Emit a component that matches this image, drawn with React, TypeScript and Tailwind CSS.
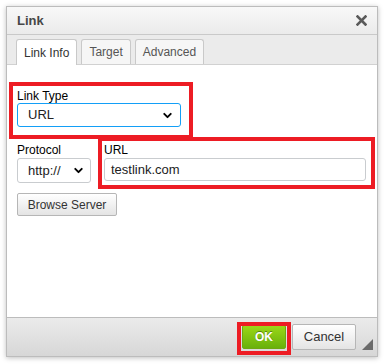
import { ChevronDown } from 'lucide-react';

function SelectBox({ value, className }: { value: string; className: string }) {
  return (
    <div className={`flex items-center justify-between bg-white rounded-[3px] ${className}`}>
      <span>{value}</span>
      <ChevronDown className="size-[13px] text-black" strokeWidth={3.5} />
    </div>
  );
}

export default function App() {
  const tabs = ['Link Info', 'Target', 'Advanced'];

  return (
    <div className="relative w-[384px] h-[364px] bg-white font-['Liberation_Sans',Arial,sans-serif] text-[12px] text-[#222]">
      <div className="absolute left-[6px] top-[6px] w-[372px] h-[351px] flex flex-col border border-[#bcbcbc] shadow-[0_1px_5px_rgba(0,0,0,0.25)] bg-white">
        {/* title */}
        <div className="h-[28px] flex items-center justify-between pl-[10px] pr-[10px] bg-gradient-to-b from-[#f8f8f8] to-[#ebebeb] border-b border-[#c9c9c9]">
          <span className="font-bold text-[13px] text-[#474747]">Link</span>
          <svg width="11" height="11" viewBox="0 0 11 11">
            <path d="M1.5 1.5 L9.5 9.5 M9.5 1.5 L1.5 9.5" stroke="#5a5a5a" strokeWidth="2.6" strokeLinecap="square" />
          </svg>
        </div>

        {/* tabs */}
        <div className="h-[30px] flex items-end gap-[4px] pl-[9px] bg-[#ebebeb] border-b border-[#d1d1d1]">
          {tabs.map((t, i) => (
            <div
              key={t}
              className={`h-[25px] flex items-center px-[7px] rounded-t-[3px] border border-b-0 border-[#c9c9c9] text-[12px] ${
                i === 0 ? 'bg-white text-[#333] -mb-px h-[26px]' : 'bg-[#f6f6f6] text-[#555]'
              }`}
            >
              {t}
            </div>
          ))}
        </div>

        {/* body */}
        <div className="flex-1 bg-white px-[10px] pt-[24px]">
          <div className="leading-[14px] text-black">Link Type</div>
          <SelectBox value="URL" className="w-[164px] h-[24px] pl-[10px] pr-[6px] border border-[#139ff7] text-[13px]" />

          <div className="flex gap-[13px] mt-[16px]">
            <div className="flex flex-col">
              <div className="leading-[14px] text-black">Protocol</div>
              <SelectBox value="http://" className="mt-[1px] w-[74px] h-[25px] pl-[10px] pr-[5px] border border-[#c9cccf] text-[13px]" />
            </div>
            <div className="flex flex-col">
              <div className="leading-[14px] text-black">URL</div>
              <div className="mt-[1px] w-[262px] h-[23px] flex items-center pl-[6px] border border-[#c9cccf] rounded-[3px] text-[13px]">
                testlink.com
              </div>
            </div>
          </div>

          <div className="mt-[10px] w-[100px] h-[23px] flex items-center justify-center border border-[#b6b6b6] rounded-[2px] bg-gradient-to-b from-[#ffffff] to-[#e4e4e4] text-[12px] text-[#333]">
            Browse Server
          </div>
        </div>

        {/* footer */}
        <div className="relative h-[39px] flex items-center justify-end gap-[6px] pr-[21px] bg-gradient-to-b from-[#ebebeb] to-[#d7d7d7] border-t border-[#bcbcbc]">
          <div className="w-[44px] h-[24px] flex items-center justify-center rounded-[2px] border border-[#6fa810] bg-gradient-to-b from-[#9ad717] to-[#69b10b] text-white font-bold text-[12px] [text-shadow:0_-1px_0_#55830c]">
            OK
          </div>
          <div className="w-[64px] h-[26px] flex items-center justify-center rounded-[2px] border border-[#b6b6b6] bg-gradient-to-b from-[#ffffff] to-[#e4e4e4] text-[13px] text-[#333]">
            Cancel
          </div>
          <div className="absolute right-[4px] bottom-[6px] w-0 h-0 border-l-[11px] border-l-transparent border-b-[11px] border-b-[#6a6a6a]" />
        </div>
      </div>

      {/* annotation boxes */}
      <div className="absolute left-[9px] top-[82px] w-[184px] h-[57px] border-[4px] border-[#ed1c24]" />
      <div className="absolute left-[98px] top-[137px] w-[277px] h-[52px] border-[4px] border-[#ed1c24]" />
      <div className="absolute left-[237px] top-[322px] w-[54px] h-[33px] border-[4px] border-[#ed1c24]" />
    </div>
  );
}
